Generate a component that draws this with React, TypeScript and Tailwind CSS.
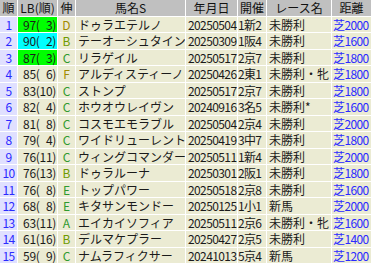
import React from "react";

type Row = [number, string, string, string, string, string, string, string, string];

const rows: Row[] = [
  [1, "97(\u20073)", "green", "D", "ドゥラエテルノ", "20250504", "1新2", "未勝利", "芝2000"],
  [2, "90(\u20072)", "cyan", "B", "テーオーシュタイン", "20250309", "1阪4", "未勝利", "芝1600"],
  [3, "87(\u20073)", "green", "C", "リラゲイル", "20250517", "2京7", "未勝利", "芝1800"],
  [4, "85(\u20076)", "", "F", "アルディスティーノ", "20250426", "2東1", "未勝利・牝", "芝1800"],
  [5, "83(10)", "", "C", "ストンプ", "20250517", "2京7", "未勝利", "芝1800"],
  [6, "82(\u20074)", "", "C", "ホウオウレイヴン", "20240916", "3名5", "未勝利*", "芝1600"],
  [7, "81(\u20078)", "", "C", "コスモエモラブル", "20250504", "2京4", "未勝利", "芝2000"],
  [8, "79(\u20074)", "", "C", "ワイドリューレント", "20250419", "3中7", "未勝利", "芝1800"],
  [9, "76(11)", "", "C", "ウィングコマンダー", "20250511", "1新4", "未勝利", "芝2000"],
  [10, "76(13)", "", "B", "ドゥラルーナ", "20250301", "2阪1", "未勝利", "芝1800"],
  [11, "76(\u20078)", "", "E", "トップパワー", "20250518", "2京8", "未勝利", "芝1600"],
  [12, "68(\u20078)", "", "E", "キタサンモンドー", "20250125", "1小1", "新馬", "芝2000"],
  [13, "63(11)", "", "A", "エイカイソフィア", "20250511", "2京6", "未勝利・牝", "芝1600"],
  [14, "61(16)", "", "B", "デルマケプラー", "20250427", "2京5", "未勝利", "芝1400"],
  [15, "59(\u20079)", "", "C", "ナムラフィクサー", "20241013", "5京4", "新馬", "芝1200"],
];

const gradeColor = (g: string) => {
  if (g === "D" || g === "F") return "text-[#a08a00]";
  if (g === "B") return "text-[#6e9a00]";
  return "text-[#2f9a2f]";
};

const lbBg = (c: string) => {
  if (c === "green") return "bg-[#00ff00]";
  if (c === "cyan") return "bg-[#00ffff]";
  return "bg-[#ebebd3]";
};

const headers = ["順", "LB(順)", "伸", "馬名S", "年月日", "開催", "レース名", "距離"];

export default function App() {
  return (
    <div className="w-[371px] h-[263px] bg-white overflow-hidden font-['Noto_Sans_CJK_JP',sans-serif] text-[12px] leading-[15px] text-[#1a1a1a]">
      <div className="grid grid-cols-[17px_39px_17px_109px_51px_28px_64px_39px] auto-rows-[15.5px] gap-px">
        {headers.map((h) => (
          <div key={h} className="bg-[#c0c0c0] flex items-center justify-center whitespace-nowrap overflow-hidden text-[#111]">
            {h}
          </div>
        ))}
        {rows.map((r) => (
          <React.Fragment key={r[0]}>
            <div className="bg-[#e0e0ff] text-[#2a2aff] flex items-center justify-center tracking-[-0.6px]">{r[0]}</div>
            <div className={`${lbBg(r[2])} flex items-center justify-end pr-px whitespace-pre tracking-[-0.3px]`}>{r[1]}</div>
            <div className={`bg-[#ebebd3] flex items-center justify-center ${gradeColor(r[3])}`}>{r[3]}</div>
            <div className="bg-[#ebebd3] flex items-center pl-[2px] whitespace-nowrap overflow-hidden">{r[4]}</div>
            <div className="bg-[#ebebd3] flex items-center pl-[2px] whitespace-nowrap overflow-hidden tracking-[-0.6px]">{r[5]}</div>
            <div className="bg-[#ebebd3] flex items-center whitespace-nowrap overflow-hidden tracking-[-0.7px]">{r[6]}</div>
            <div className="bg-[#ebebd3] flex items-center pl-[2px] whitespace-nowrap overflow-hidden">{r[7]}</div>
            <div className="bg-[#ebebd3] flex items-center pl-px whitespace-nowrap overflow-hidden text-[#2a2aff] tracking-[-0.6px]">{r[8]}</div>
          </React.Fragment>
        ))}
      </div>
    </div>
  );
}
